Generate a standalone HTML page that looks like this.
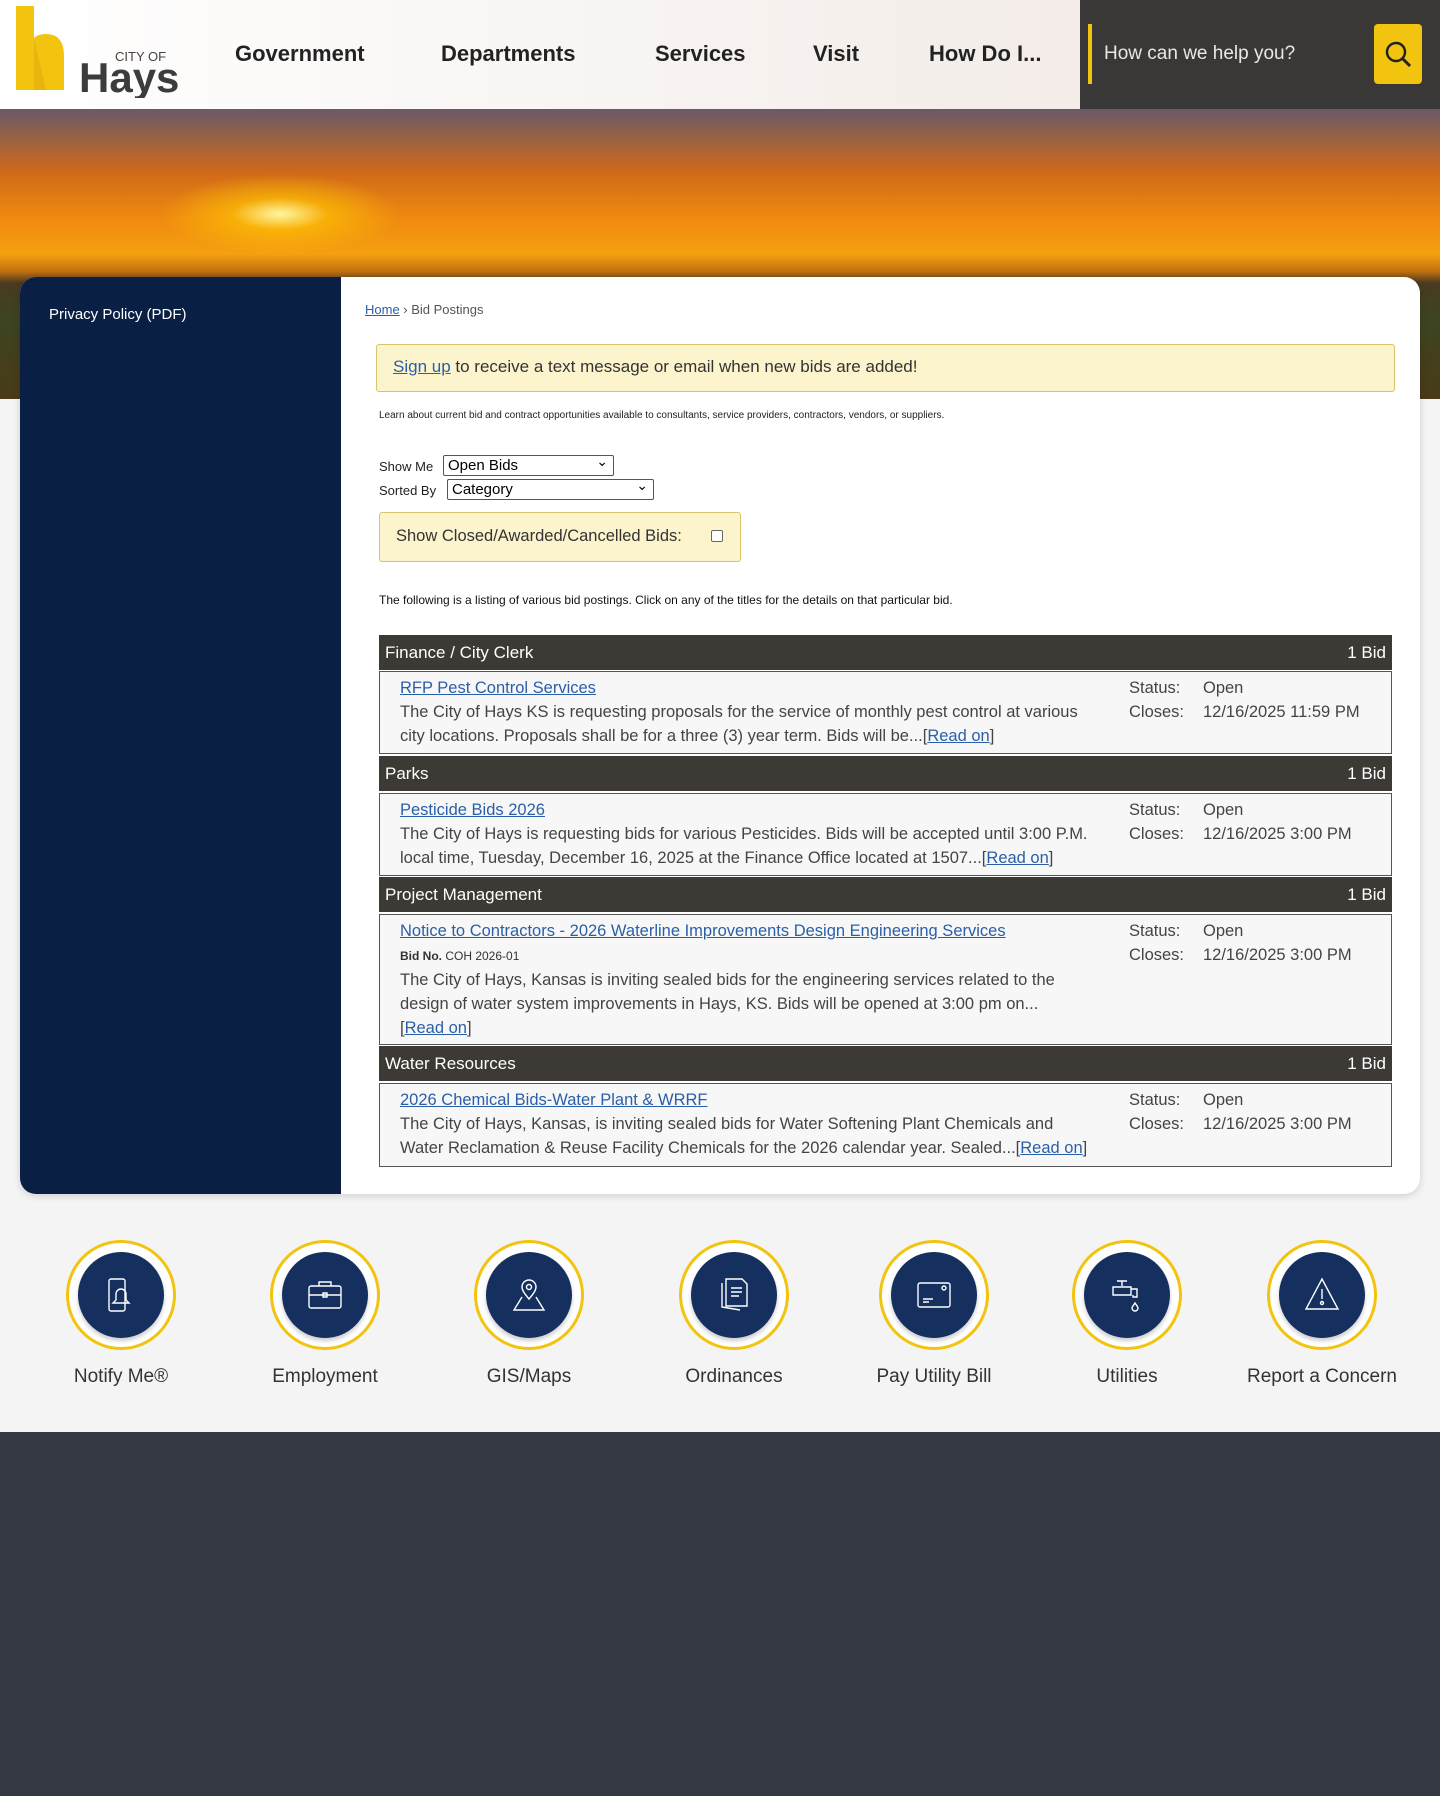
<!DOCTYPE html>
<html><head><meta charset="utf-8"><style>
*{box-sizing:border-box;margin:0;padding:0}
body{width:1440px;height:1796px;background:#343842;font-family:"Liberation Sans",sans-serif;position:relative;overflow:hidden}
.hdr{position:absolute;left:0;top:0;width:1080px;height:109px;background:linear-gradient(90deg,#fff,#f3ece8)}
.srch{position:absolute;left:1080px;top:0;width:360px;height:109px;background:#3a3836}
.srch .bar{position:absolute;left:8px;top:24px;width:4px;height:60px;background:#f2c40f}
.srch .ph{position:absolute;left:24px;top:43px;color:#e8e8e8;font-size:19px}
.srch .btn{position:absolute;left:294px;top:24px;width:48px;height:60px;background:#f2c40f;border-radius:4px}
.nav{position:absolute;top:41px;font-weight:bold;font-size:22px;color:#222}
.hero{position:absolute;left:0;top:109px;width:1440px;height:290px;background:
radial-gradient(ellipse 120px 40px at 280px 105px,#fff7a0,rgba(255,200,0,.6) 40%,rgba(255,150,0,0) 100%),
linear-gradient(180deg,#6a5a68 0%,#d06a18 22%,#f08a10 38%,#f5a010 50%,#c07010 56%,#4a3a20 60%,#3c4420 72%,#4a3a18 100%)}
.page{position:absolute;left:0;top:399px;width:1440px;height:1033px;background:#f4f4f4}
.card{position:absolute;left:20px;top:277px;width:1400px;height:917px;background:#fff;border-radius:16px;box-shadow:0 2px 8px rgba(0,0,0,.15);overflow:hidden}
.side{position:absolute;left:0;top:0;width:321px;height:100%;background:#0a1f44}
.side a{position:absolute;left:29px;top:29px;color:#fff;font-size:15px}
.c{position:absolute;color:#333}
a{color:#2a5fa8;text-decoration:underline}
.sel{position:absolute;height:21px;border:1px solid #555;border-radius:2px;background:#fff;font-size:15px;padding-left:4px;line-height:19px;color:#000}
.sel:after{content:"⌄";position:absolute;right:5px;top:-4px;font-size:14px}
.th{position:absolute;left:379px;width:1013px;height:35px;background:#3d3a36;color:#fff;font-size:17px;line-height:35px;padding:0 6px}
.th span{float:right}
.tr{position:absolute;left:379px;width:1013px;background:#f7f7f7;border:1px solid #555;font-size:16.5px;color:#444;line-height:24px}
.tr .d{position:absolute;left:20px;top:4px;width:688px}
.tr .s{position:absolute;left:749px;top:4px}
.tr .v{position:absolute;left:823px;top:4px}
.ic{position:absolute;top:1240px;width:110px;height:110px;border-radius:50%;border:3px solid #f2c40f;background:#fff}
.ic i{position:absolute;left:9px;top:9px;width:86px;height:86px;border-radius:50%;background:#15305f;box-shadow:0 3px 4px rgba(0,0,0,.2)}
.ic svg{position:absolute;left:30px;top:30px}
.lb{position:absolute;top:1366px;width:200px;text-align:center;font-size:19px;color:#333}
</style></head><body>
<div class="hdr"></div>
<svg style="position:absolute;left:16px;top:6px" width="175" height="92"><path d="M0 0h18v32q4-4 12-4q18 0 18 22v34h-48z" fill="#f2c40f"/><path d="M18 32v52h12z" fill="#e2aa0a" opacity=".6"/><text x="99" y="55" font-size="13" fill="#444" font-family="Liberation Sans">CITY OF</text><text x="63" y="86" font-size="42" font-weight="bold" fill="#3c3c3c" font-family="Liberation Sans">Hays</text></svg>
<div class="nav" style="left:235px">Government</div>
<div class="nav" style="left:441px">Departments</div>
<div class="nav" style="left:655px">Services</div>
<div class="nav" style="left:813px">Visit</div>
<div class="nav" style="left:929px">How Do I...</div>
<div class="srch"><div class="bar"></div><div class="ph">How can we help you?</div><div class="btn"><svg width="48" height="60"><circle cx="22" cy="28" r="9" fill="none" stroke="#222" stroke-width="2.5"/><path d="M28 34l8 8" stroke="#222" stroke-width="3"/></svg></div></div>
<div class="hero"></div>
<div class="page"></div>
<div class="card"><div class="side"><a style="text-decoration:none">Privacy Policy (PDF)</a></div></div>
<div class="c" style="left:365px;top:302px;font-size:13px;color:#555"><a>Home</a> › Bid Postings</div>
<div class="c" style="left:376px;top:344px;width:1019px;height:48px;background:#fcf4cc;border:1px solid #d8c56b;border-radius:3px;font-size:17px;padding:12px 16px">
<a>Sign up</a> to receive a text message or email when new bids are added!</div>
<div class="c" style="left:379px;top:410px;font-size:10px;color:#222">Learn about current bid and contract opportunities available to consultants, service providers, contractors, vendors, or suppliers.</div>
<div class="c" style="left:379px;top:459px;font-size:13px;color:#222">Show Me</div>
<div class="sel" style="left:443px;top:455px;width:171px">Open Bids</div>
<div class="c" style="left:379px;top:483px;font-size:13px;color:#222">Sorted By</div>
<div class="sel" style="left:447px;top:479px;width:207px">Category</div>
<div class="c" style="left:379px;top:512px;width:362px;height:50px;background:#fcf4cc;border:1px solid #d8c56b;border-radius:3px;font-size:16.5px;padding:14px 16px;white-space:nowrap">Show Closed/Awarded/Cancelled Bids:<span style="position:absolute;left:331px;top:17px;width:12px;height:12px;border:1px solid #666;border-radius:2px;background:#fff"></span></div>
<div class="c" style="left:379px;top:593px;font-size:12px;color:#111">The following is a listing of various bid postings. Click on any of the titles for the details on that particular bid.</div>
<div class="th" style="top:635px">Finance / City Clerk<span>1 Bid</span></div>
<div class="tr" style="top:671px;height:83px"><div class="d"><a>RFP Pest Control Services</a><br>The City of Hays KS is requesting proposals for the service of monthly pest control at various city locations. Proposals shall be for a three (3) year term. Bids will be...[<a>Read on</a>]</div><div class="s">Status:<br>Closes:</div><div class="v">Open<br>12/16/2025 11:59 PM</div></div>
<div class="th" style="top:756px">Parks<span>1 Bid</span></div>
<div class="tr" style="top:793px;height:83px"><div class="d"><a>Pesticide Bids 2026</a><br>The City of Hays is requesting bids for various Pesticides. Bids will be accepted until 3:00 P.M. local time, Tuesday, December 16, 2025 at the Finance Office located at 1507...[<a>Read on</a>]</div><div class="s">Status:<br>Closes:</div><div class="v">Open<br>12/16/2025 3:00 PM</div></div>
<div class="th" style="top:877px">Project Management<span>1 Bid</span></div>
<div class="tr" style="top:914px;height:131px"><div class="d"><a>Notice to Contractors - 2026 Waterline Improvements Design Engineering Services</a><br><span style="font-size:12px;line-height:24px;color:#333"><b>Bid No.</b> COH 2026-01</span><br>The City of Hays, Kansas is inviting sealed bids for the engineering services related to the design of water system improvements in Hays, KS. Bids will be opened at 3:00 pm on...<br>[<a>Read on</a>]</div><div class="s">Status:<br>Closes:</div><div class="v">Open<br>12/16/2025 3:00 PM</div></div>
<div class="th" style="top:1046px">Water Resources<span>1 Bid</span></div>
<div class="tr" style="top:1083px;height:84px"><div class="d"><a>2026 Chemical Bids-Water Plant &amp; WRRF</a><br>The City of Hays, Kansas, is inviting sealed bids for Water Softening Plant Chemicals and Water Reclamation &amp; Reuse Facility Chemicals for the 2026 calendar year. Sealed...[<a>Read on</a>]</div><div class="s">Status:<br>Closes:</div><div class="v">Open<br>12/16/2025 3:00 PM</div></div>

<div class="ic" style="left:66px"><i></i><svg width="44" height="44" fill="none" stroke="#fff" stroke-width="1.4"><rect x="10" y="6" width="16" height="32" rx="2"/><path d="M22 16a5 5 0 0 1 5 5v6l3 3h-16l3-3v-6a5 5 0 0 1 5-5z"/></svg></div>
<div class="ic" style="left:270px"><i></i><svg width="44" height="44" fill="none" stroke="#fff" stroke-width="1.4"><rect x="6" y="13" width="32" height="22" rx="2"/><path d="M16 13v-4h12v4M6 22h32M20 20h4v4h-4z"/></svg></div>
<div class="ic" style="left:474px"><i></i><svg width="44" height="44" fill="none" stroke="#fff" stroke-width="1.4"><path d="M22 26c-5-6-7-9-7-12a7 7 0 0 1 14 0c0 3-2 6-7 12z"/><circle cx="22" cy="14" r="2.5"/><path d="M15 24l-8 13h30l-8-13"/></svg></div>
<div class="ic" style="left:679px"><i></i><svg width="44" height="44" fill="none" stroke="#fff" stroke-width="1.4"><path d="M10 10v24l18 3M14 6h16l5 5v22h-21z M19 15h11M19 19h11M19 23h8"/></svg></div>
<div class="ic" style="left:879px"><i></i><svg width="44" height="44" fill="none" stroke="#fff" stroke-width="1.4"><rect x="6" y="10" width="32" height="24" rx="2"/><path d="M11 26h10M11 29h6"/><circle cx="32" cy="15" r="2"/></svg></div>
<div class="ic" style="left:1072px"><i></i><svg width="44" height="44" fill="none" stroke="#fff" stroke-width="1.4"><path d="M12 8h10M17 8v5M8 14h18v8H8zM26 16h6v8h-4v-2"/><path d="M30 30c-2 3-3 4-3 5a3 3 0 0 0 6 0c0-1-1-2-3-5z"/></svg></div>
<div class="ic" style="left:1267px"><i></i><svg width="44" height="44" fill="none" stroke="#fff" stroke-width="1.4"><path d="M22 6l16 30H6z M22 16v10"/><circle cx="22" cy="30" r="1.5"/></svg></div>
<div class="lb" style="left:21px">Notify Me®</div>
<div class="lb" style="left:225px">Employment</div>
<div class="lb" style="left:429px">GIS/Maps</div>
<div class="lb" style="left:634px">Ordinances</div>
<div class="lb" style="left:834px">Pay Utility Bill</div>
<div class="lb" style="left:1027px">Utilities</div>
<div class="lb" style="left:1222px">Report a Concern</div>
</body></html>
